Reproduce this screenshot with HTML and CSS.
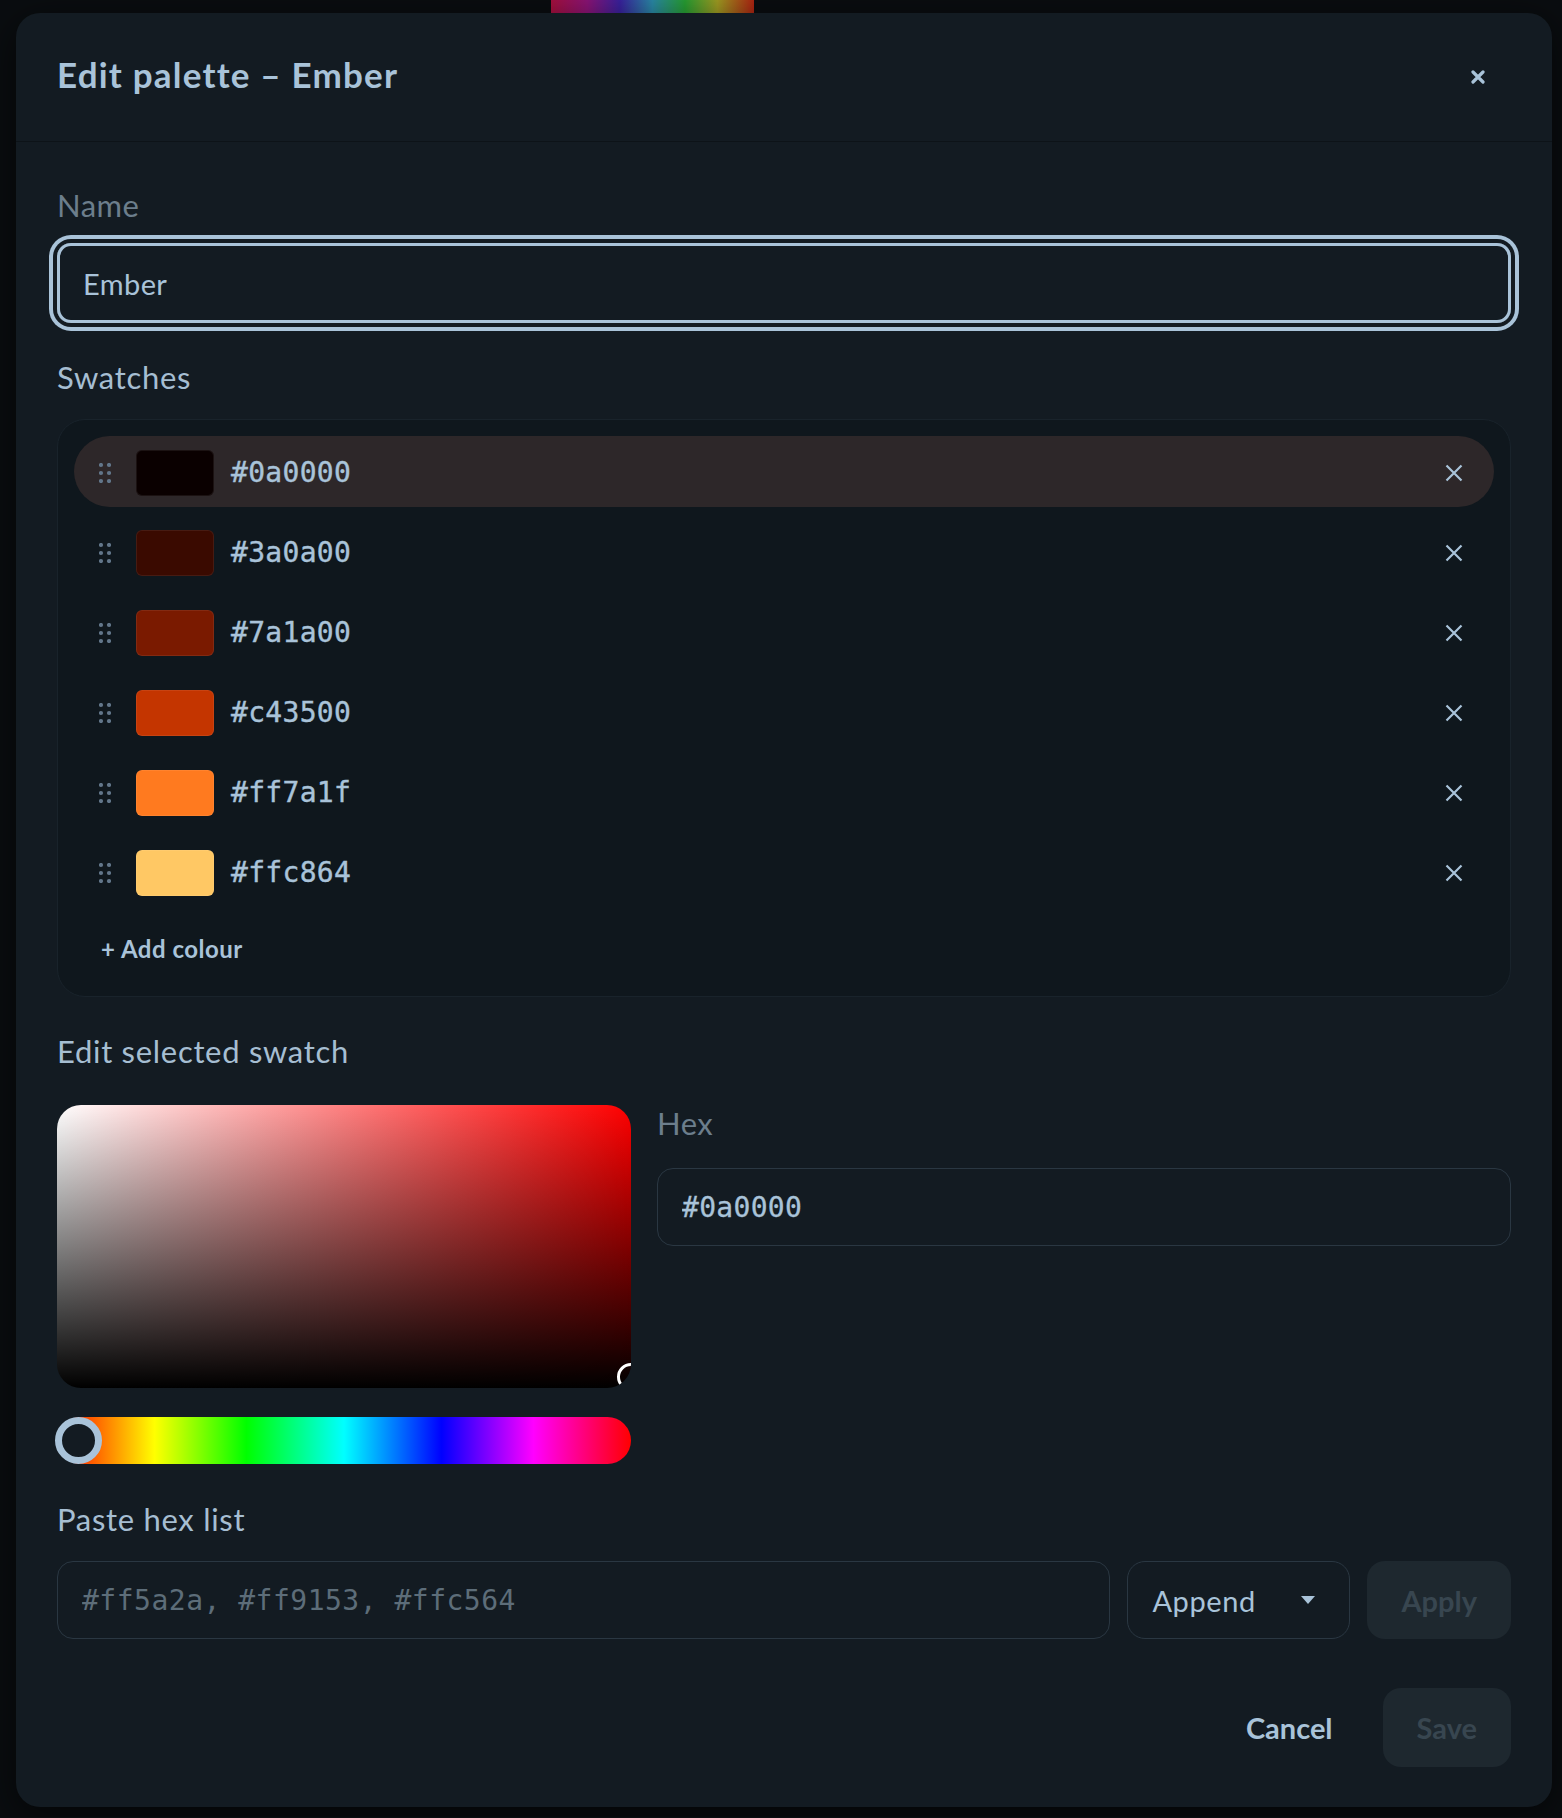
FILE: index.html
```html
<!DOCTYPE html>
<html lang="en">
<head>
  <meta charset="UTF-8">
  <meta name="viewport" content="width=device-width, initial-scale=1.0">
  <title>Edit palette – Ember</title>
  <link rel="stylesheet" href="styles.css">
</head>
<body>
  <div class="backdrop-strip"></div>
  <div class="modal">
    <div class="modal-header">
      <h2>Edit palette – Ember</h2>
      <button class="close-btn" aria-label="Close">
        <svg width="14" height="14" viewBox="0 0 14 14"><path d="M2 2L12 12M12 2L2 12" stroke="#a9c3d9" stroke-width="3.2" stroke-linecap="round"/></svg>
      </button>
    </div>

    <div class="modal-body">
      <label class="field-label dim">Name</label>
      <input class="text-input name-input" type="text" value="Ember">

      <h3 class="section-label">Swatches</h3>
      <div class="swatch-list">
        <div class="swatch-row selected">
          <svg class="handle" width="12" height="20" viewBox="0 0 12 20"><g fill="#62768a"><circle cx="2" cy="2" r="2.1"/><circle cx="10" cy="2" r="2.1"/><circle cx="2" cy="10" r="2.1"/><circle cx="10" cy="10" r="2.1"/><circle cx="2" cy="18" r="2.1"/><circle cx="10" cy="18" r="2.1"/></g></svg>
          <span class="chip" style="background:#0a0000"></span>
          <span class="hex">#0a0000</span>
          <svg class="remove" width="18" height="18" viewBox="0 0 18 18"><path d="M1.5 1.5L16.5 16.5M16.5 1.5L1.5 16.5" stroke="#a9c3d9" stroke-width="2.2"/></svg>
        </div>
        <div class="swatch-row">
          <svg class="handle" width="12" height="20" viewBox="0 0 12 20"><g fill="#62768a"><circle cx="2" cy="2" r="2.1"/><circle cx="10" cy="2" r="2.1"/><circle cx="2" cy="10" r="2.1"/><circle cx="10" cy="10" r="2.1"/><circle cx="2" cy="18" r="2.1"/><circle cx="10" cy="18" r="2.1"/></g></svg>
          <span class="chip" style="background:#3a0a00"></span>
          <span class="hex">#3a0a00</span>
          <svg class="remove" width="18" height="18" viewBox="0 0 18 18"><path d="M1.5 1.5L16.5 16.5M16.5 1.5L1.5 16.5" stroke="#a9c3d9" stroke-width="2.2"/></svg>
        </div>
        <div class="swatch-row">
          <svg class="handle" width="12" height="20" viewBox="0 0 12 20"><g fill="#62768a"><circle cx="2" cy="2" r="2.1"/><circle cx="10" cy="2" r="2.1"/><circle cx="2" cy="10" r="2.1"/><circle cx="10" cy="10" r="2.1"/><circle cx="2" cy="18" r="2.1"/><circle cx="10" cy="18" r="2.1"/></g></svg>
          <span class="chip" style="background:#7a1a00"></span>
          <span class="hex">#7a1a00</span>
          <svg class="remove" width="18" height="18" viewBox="0 0 18 18"><path d="M1.5 1.5L16.5 16.5M16.5 1.5L1.5 16.5" stroke="#a9c3d9" stroke-width="2.2"/></svg>
        </div>
        <div class="swatch-row">
          <svg class="handle" width="12" height="20" viewBox="0 0 12 20"><g fill="#62768a"><circle cx="2" cy="2" r="2.1"/><circle cx="10" cy="2" r="2.1"/><circle cx="2" cy="10" r="2.1"/><circle cx="10" cy="10" r="2.1"/><circle cx="2" cy="18" r="2.1"/><circle cx="10" cy="18" r="2.1"/></g></svg>
          <span class="chip" style="background:#c43500"></span>
          <span class="hex">#c43500</span>
          <svg class="remove" width="18" height="18" viewBox="0 0 18 18"><path d="M1.5 1.5L16.5 16.5M16.5 1.5L1.5 16.5" stroke="#a9c3d9" stroke-width="2.2"/></svg>
        </div>
        <div class="swatch-row">
          <svg class="handle" width="12" height="20" viewBox="0 0 12 20"><g fill="#62768a"><circle cx="2" cy="2" r="2.1"/><circle cx="10" cy="2" r="2.1"/><circle cx="2" cy="10" r="2.1"/><circle cx="10" cy="10" r="2.1"/><circle cx="2" cy="18" r="2.1"/><circle cx="10" cy="18" r="2.1"/></g></svg>
          <span class="chip" style="background:#ff7a1f"></span>
          <span class="hex">#ff7a1f</span>
          <svg class="remove" width="18" height="18" viewBox="0 0 18 18"><path d="M1.5 1.5L16.5 16.5M16.5 1.5L1.5 16.5" stroke="#a9c3d9" stroke-width="2.2"/></svg>
        </div>
        <div class="swatch-row">
          <svg class="handle" width="12" height="20" viewBox="0 0 12 20"><g fill="#62768a"><circle cx="2" cy="2" r="2.1"/><circle cx="10" cy="2" r="2.1"/><circle cx="2" cy="10" r="2.1"/><circle cx="10" cy="10" r="2.1"/><circle cx="2" cy="18" r="2.1"/><circle cx="10" cy="18" r="2.1"/></g></svg>
          <span class="chip" style="background:#ffc864"></span>
          <span class="hex">#ffc864</span>
          <svg class="remove" width="18" height="18" viewBox="0 0 18 18"><path d="M1.5 1.5L16.5 16.5M16.5 1.5L1.5 16.5" stroke="#a9c3d9" stroke-width="2.2"/></svg>
        </div>
        <button class="add-btn">+ Add colour</button>
      </div>

      <h3 class="section-label picker-title">Edit selected swatch</h3>
      <div class="picker">
        <div class="picker-left">
          <div class="sat-box">
            <span class="sat-cursor"></span>
          </div>
          <div class="hue-bar">
            <span class="hue-thumb"></span>
          </div>
        </div>
        <div class="picker-right">
          <label class="field-label dim hex-label">Hex</label>
          <input class="text-input mono-input" type="text" value="#0a0000">
        </div>
      </div>

      <h3 class="section-label paste-title">Paste hex list</h3>
      <div class="paste-row">
        <input class="text-input mono-input paste-input" type="text" placeholder="#ff5a2a, #ff9153, #ffc564">
        <div class="select">
          <span>Append</span>
          <span class="caret"></span>
        </div>
        <button class="btn btn-disabled">Apply</button>
      </div>

      <div class="modal-footer">
        <button class="btn btn-plain">Cancel</button>
        <button class="btn btn-disabled">Save</button>
      </div>
    </div>
  </div>
</body>
</html>
```

FILE: styles.css
```css
* {
  box-sizing: border-box;
}
body {
  margin: 0;
  padding: 0 10px 10px 16px;
  background-color: #0a0d10;
  font-family: "Lato", "Noto Sans", sans-serif;
  color: #a9c3d9;
}
.backdrop-strip {
  width: 203px;
  height: 13px;
  margin-left: 535px;
  background: linear-gradient(to right, #a8103e, #8c1478 18%, #3a22a0 34%, #2a8aa8 50%, #27a033 66%, #a19d22 82%, #b02412 100%);
}
.modal {
  width: 1536px;
  background-color: #131b22;
  border-radius: 24px;
  box-shadow: 0 10px 40px rgba(0, 0, 0, 0.6);
}
.modal-header {
  height: 129px;
  display: flex;
  align-items: center;
  justify-content: space-between;
  padding: 0 41px 0 41px;
  border-bottom: 1px solid #0d1318;
}
.modal-header h2 {
  margin: 0 0 7px;
  font-size: 35px;
  line-height: 42px;
  font-weight: 700;
  letter-spacing: 1.2px;
  color: #a9c3d9;
}
.close-btn {
  width: 24px;
  height: 24px;
  margin-right: 21px;
  padding: 0;
  border: none;
  background: none;
  display: flex;
  align-items: center;
  justify-content: center;
}
.modal-body {
  padding: 45px 41px 40px 41px;
}
.field-label {
  display: block;
  font-size: 31px;
  line-height: 36px;
  letter-spacing: 0.5px;
  margin-bottom: 20px;
}
.dim {
  color: #6c7e8c;
}
.section-label {
  margin: 36px 0 24px;
  font-size: 31px;
  line-height: 36px;
  font-weight: 400;
  letter-spacing: 0.7px;
  color: #a6bed2;
}
.text-input {
  display: block;
  width: 100%;
  height: 78px;
  padding: 0 24px;
  border: 1.5px solid #2a3742;
  border-radius: 16px;
  background-color: transparent;
  font-family: "Lato", sans-serif;
  font-size: 29px;
  letter-spacing: 0.4px;
  color: #a9c3d9;
  outline: none;
}
.name-input {
  height: 80px;
  padding-left: 23px;
  border: 3px solid #a9c3d9;
  border-radius: 14px;
  box-shadow: 0 0 0 4px #131b22, 0 0 0 8px #a9c3d9;
}
.mono-input {
  font-family: "DejaVu Sans Mono", "Liberation Mono", monospace;
  font-size: 28px;
  letter-spacing: 0.3px;
  -webkit-text-stroke: 0.3px #a9c3d9;
}
.mono-input::placeholder {
  color: #5d6d79;
  letter-spacing: 0.5px;
  -webkit-text-stroke: 0;
}

/* swatches */
.swatch-list {
  display: flex;
  flex-direction: column;
  gap: 9px;
  padding: 16px;
  border: 1px solid #19232b;
  border-radius: 28px;
  background-color: #0f171d;
}
.swatch-row {
  height: 71px;
  display: flex;
  align-items: center;
  padding: 2px 31px 0 25px;
  border-radius: 36px;
}
.swatch-row.selected {
  background-color: #2d2729;
}
.chip {
  width: 78px;
  height: 46px;
  margin-left: 25px;
  border-radius: 6px;
  box-shadow: inset 0 0 0 1px rgba(255, 255, 255, 0.07);
}
.hex {
  margin-left: 17px;
  font-family: "DejaVu Sans Mono", "Liberation Mono", monospace;
  font-size: 28px;
  letter-spacing: 0.3px;
  color: #a9c3d9;
  -webkit-text-stroke: 0.4px #a9c3d9;
}
.remove {
  margin-left: auto;
}
.add-btn {
  height: 64px;
  padding: 0 0 0 27px;
  border: none;
  background: none;
  text-align: left;
  font-family: "Lato", sans-serif;
  font-size: 24px;
  font-weight: 700;
  letter-spacing: 0.5px;
  color: #a9c3d9;
}

/* picker */
.picker-title {
  margin-bottom: 36px;
}
.picker {
  display: grid;
  grid-template-columns: 574px 1fr;
  gap: 26px;
}
.sat-box {
  position: relative;
  height: 283px;
  border-radius: 24px;
  overflow: hidden;
  background: linear-gradient(to top, #000, rgba(0, 0, 0, 0)), linear-gradient(to right, #fff, #f00);
}
.sat-cursor {
  position: absolute;
  left: 100%;
  top: 96%;
  width: 28px;
  height: 28px;
  margin: -14px 0 0 -14px;
  border: 3px solid #fff;
  border-radius: 50%;
}
.hue-bar {
  position: relative;
  height: 47px;
  margin-top: 29px;
  border-radius: 24px;
  background: linear-gradient(to right, #f00 0%, #ff0 17%, #0f0 33%, #0ff 50%, #00f 67%, #f0f 83%, #f00 100%);
}
.hue-thumb {
  position: absolute;
  left: -2px;
  top: 0;
  width: 47px;
  height: 47px;
  border: 7px solid #a9c3d9;
  border-radius: 50%;
  background-color: #131b22;
}
.hex-label {
  margin-bottom: 27px;
}

/* paste row */
.paste-title {
  margin-top: 37px;
  margin-bottom: 24px;
}
.paste-row {
  display: flex;
  gap: 17px;
}
.paste-input {
  flex: 1;
}
.select {
  width: 223px;
  height: 78px;
  display: flex;
  align-items: center;
  justify-content: space-between;
  padding: 0 34px 0 24px;
  border: 1.5px solid #2a3742;
  border-radius: 18px;
  font-size: 29px;
  letter-spacing: 0.6px;
  color: #a9c3d9;
}
.caret {
  width: 0;
  height: 0;
  border-left: 7px solid transparent;
  border-right: 7px solid transparent;
  border-top: 8px solid #a9c3d9;
}
.btn {
  height: 78px;
  padding: 0 34px;
  border: none;
  border-radius: 18px;
  font-family: "Lato", sans-serif;
  font-size: 29px;
  font-weight: 700;
}
.btn-disabled {
  background-color: #1e282f;
  color: #384650;
}
.btn-plain {
  background: none;
  color: #a9c3d9;
}
.modal-footer {
  display: flex;
  justify-content: flex-end;
  gap: 16px;
  margin-top: 49px;
}
.modal-footer .btn {
  height: 79px;
}
```
